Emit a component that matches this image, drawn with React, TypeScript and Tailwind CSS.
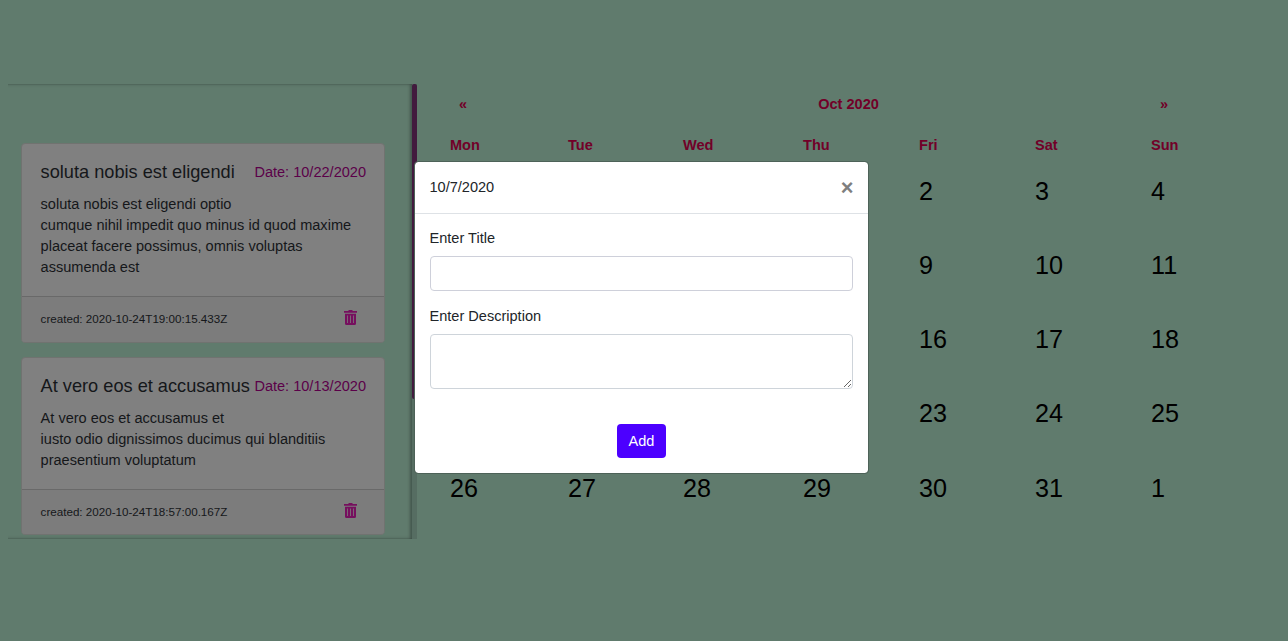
import React from "react";

type Note = { title: string; date: string; lines: string[]; created: string };

const notes: Note[] = [
  {
    title: "soluta nobis est eligendi",
    date: "10/22/2020",
    lines: [
      "soluta nobis est eligendi optio",
      "cumque nihil impedit quo minus id quod maxime",
      "placeat facere possimus, omnis voluptas",
      "assumenda est",
    ],
    created: "2020-10-24T19:00:15.433Z",
  },
  {
    title: "At vero eos et accusamus",
    date: "10/13/2020",
    lines: [
      "At vero eos et accusamus et",
      "iusto odio dignissimos ducimus qui blanditiis",
      "praesentium voluptatum",
    ],
    created: "2020-10-24T18:57:00.167Z",
  },
];

const days = ["Mon", "Tue", "Wed", "Thu", "Fri", "Sat", "Sun"];
const weeks = [
  [28, 29, 30, 1, 2, 3, 4],
  [5, 6, 7, 8, 9, 10, 11],
  [12, 13, 14, 15, 16, 17, 18],
  [19, 20, 21, 22, 23, 24, 25],
  [26, 27, 28, 29, 30, 31, 1],
];

function TrashIcon() {
  return (
    <svg width="13" height="15" viewBox="0 0 13 15" fill="#760f5e" className="mr-[9px] -mt-[4px]">
      <path
        fillRule="evenodd"
        d="M0 1h4l1-1h3l1 1h4v1.800H0zM1 3.700h11v9.800a1.500 1.500 0 0 1-1.500 1.500h-8A1.500 1.500 0 0 1 1 13.500zM3.200 5.500v7.500h.8V5.500zM6.100 5.500v7.500h.8V5.500zM9 5.500v7.500h.8V5.500z"
      />
    </svg>
  );
}

function NoteCard({ note }: { note: Note }) {
  return (
    <article className="w-[364px] shrink-0 rounded-[4px] border border-[#707370] bg-[#808080] last:[&>footer]:h-[45px] last:[&_small]:-mt-[2px]">
      <div className="pl-[18.600px] pr-[18px] pt-[17px] pb-[18px]">
        <div className="flex h-[22px] items-center justify-between whitespace-nowrap">
          <h5 className="text-[18.200px] leading-[22px]">{note.title}</h5>
          <span className="mt-px text-[#5b0049]">Date: {note.date}</span>
        </div>
        <div className="mt-[11px] whitespace-nowrap">
          {note.lines.map((l) => (
            <p key={l}>{l}</p>
          ))}
        </div>
      </div>
      <footer className="flex h-[46px] items-center justify-between rounded-b-[3px] border-t border-[#696969] bg-[#7c7c7c] pl-[18.600px] pr-[18px]">
        <small className="-mt-[3px] text-[11.640px]">created: {note.created}</small>
        <TrashIcon />
      </footer>
    </article>
  );
}

function Calendar() {
  return (
    <section className="w-[816px] pl-[33px] pt-[10px]">
      <div className="grid grid-cols-[26px_1fr_73px] text-center font-bold text-[#720028]">
        <span>«</span>
        <span className="pl-[61px]">Oct 2020</span>
        <span className="text-left">»</span>
      </div>
      <div className="mt-[20px] grid grid-cols-[118px_115px_120px_116px_116px_116px_80px] font-bold text-[#720028]">
        {days.map((d) => (
          <span key={d}>{d}</span>
        ))}
      </div>
      <div className="-mt-[2px]">
        {weeks.map((w, i) => (
          <div
            key={i}
            className="grid h-[74.250px] grid-cols-[118px_115px_120px_116px_116px_116px_80px] items-center text-[25.200px] text-black"
          >
            {w.map((n, j) => (
              <span key={j}>{n}</span>
            ))}
          </div>
        ))}
      </div>
    </section>
  );
}

function Dialog() {
  return (
    <div
      role="dialog"
      className="absolute left-[414px] top-[161px] h-[313px] w-[455px] rounded-[4px] border border-[#4d6258] bg-white bg-clip-padding text-[#212529]"
    >
      <header className="flex h-[52px] items-center justify-between border-b border-[#dee2e6] px-[14.500px]">
        <span>10/7/2020</span>
        <button aria-label="Close" className="mt-[1px] text-[21.750px] font-bold leading-[22px] text-[#7f7f7f]">
          ×
        </button>
      </header>
      <form className="flex flex-col pl-[14.500px] pr-[15px] pt-[14px]">
        <label htmlFor="title">Enter Title</label>
        <input id="title" className="mt-[7px] h-[35px] rounded-[4px] border border-[#ced0da] bg-white px-[11px]" />
        <label htmlFor="description" className="mt-[15px]">Enter Description</label>
        <textarea
          id="description"
          className="mt-[7px] h-[55px] w-full resize rounded-[4px] border border-[#ced4da] bg-white px-[11px] py-[5px]"
        />
        <button
          type="button"
          className="mt-[35px] ml-[187px] h-[34px] w-[49px] rounded-[4px] bg-[#4c00ff] pl-px text-white"
        >
          Add
        </button>
      </form>
    </div>
  );
}

export default function App() {
  return (
    <main className="relative h-[641px] w-[1288px] overflow-hidden bg-[#607b6d] font-['Liberation_Sans',Arial,sans-serif] text-[14.550px] leading-[21px] text-[#15171a]">
      <div className="flex pl-[8px] pt-[84px]">
        <aside className="flex h-[455px] w-[409px] overflow-hidden">
          <div className="flex h-full w-[404px] shrink-0 flex-col gap-[14px] overflow-hidden pl-[13px] pt-[59px] shadow-[inset_-3px_2px_3px_-1px_rgba(0,0,0,0.16),inset_-3px_-2px_3px_-1px_rgba(0,0,0,0.16),inset_0_1px_0_rgba(0,0,0,0.05),inset_0_-1px_0_rgba(0,0,0,0.05)]">
            {notes.map((n) => (
              <NoteCard key={n.date} note={n} />
            ))}
          </div>
          <div className="w-[5px] bg-[#566d62]">
            <div className="h-[315px] rounded-[2px] bg-[#421b3e]" />
          </div>
        </aside>
        <Calendar />
      </div>
      <Dialog />
    </main>
  );
}
